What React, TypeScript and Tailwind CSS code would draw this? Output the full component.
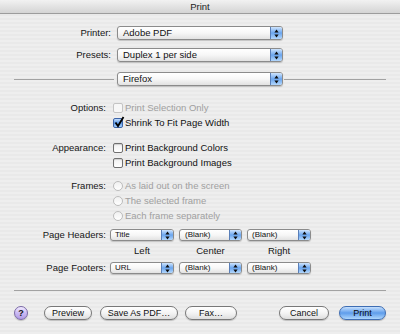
import type { ReactNode } from 'react';

function Arrows() {
  return (
    <svg width="5" height="9" viewBox="0 0 5 9">
      <path d="M2.5 0.6 L4.6 3.4 L0.4 3.4 Z" fill="#0d0d0d" />
      <path d="M0.4 5.6 L4.6 5.6 L2.5 8.4 Z" fill="#0d0d0d" />
    </svg>
  );
}

function Popup({ label, className, textClass }: { label: string; className: string; textClass: string }) {
  return (
    <div
      className={`flex items-stretch overflow-hidden rounded-[3px] border border-[#8b8b8b] bg-gradient-to-b from-white via-[#f7f7f7] to-[#e2e2e2] shadow-[0_1px_1px_rgba(0,0,0,0.18)] ${className}`}
    >
      <span className={`flex flex-1 items-center text-[#111] ${textClass}`}>{label}</span>
      <span className="flex w-[12px] items-center justify-center border-l border-[#5a7fb8] bg-gradient-to-b from-[#cfe4fc] via-[#6aa5ee] to-[#b3d7fc]">
        <Arrows />
      </span>
    </div>
  );
}

function Checkbox({ checked, disabled }: { checked?: boolean; disabled?: boolean }) {
  if (checked) {
    return (
      <span className="relative block h-[10px] w-[10px] rounded-[2px] border border-[#3d64a8] bg-gradient-to-b from-[#c4defc] via-[#5c9ae9] to-[#a9d2fb]">
        <svg className="absolute -top-[3px] left-[0px]" width="11" height="12" viewBox="0 0 11 12">
          <path d="M1.5 6.5 L4 10 L9.5 1" stroke="#000" strokeWidth="1.8" fill="none" />
        </svg>
      </span>
    );
  }
  return (
    <span
      className={
        disabled
          ? 'block h-[10px] w-[10px] rounded-[2px] border border-[#c4c4c4] bg-[#f7f7f7]'
          : 'block h-[10px] w-[10px] rounded-[2px] border border-[#707070] bg-gradient-to-b from-[#f2f2f2] to-white shadow-[inset_0_1px_1px_rgba(0,0,0,0.15)]'
      }
    />
  );
}

function Radio() {
  return <span className="block h-[10px] w-[10px] rounded-full border border-[#bcbcbc] bg-gradient-to-b from-[#f0f0f0] to-white" />;
}

function Row({ label, children }: { label?: string; children: ReactNode }) {
  return (
    <div className="flex h-[15px] items-center">
      <span className="w-[106px] text-right text-[#151515]">{label}</span>
      <div className="ml-[7px] flex items-center gap-[2px]">{children}</div>
    </div>
  );
}

function Button({ label, className }: { label: string; className: string }) {
  return (
    <div
      className={`flex h-[14px] items-center justify-center rounded-full border border-[#787878] bg-gradient-to-b from-white via-[#f4f4f4] to-[#dedede] text-[9px] text-[#111] shadow-[0_1px_1px_rgba(0,0,0,0.2)] ${className}`}
    >
      {label}
    </div>
  );
}

export default function App() {
  return (
    <div className="flex h-[334px] w-[400px] flex-col overflow-hidden bg-[repeating-linear-gradient(0deg,#eeeeee_0px,#eeeeee_2px,#e9e9e9_2px,#e9e9e9_4px)] font-['Liberation_Sans',Arial,sans-serif] text-[9.5px] leading-none">
      {/* Title bar */}
      <div className="flex h-[14px] items-center justify-center border-b border-[#9c9c9c] bg-gradient-to-b from-[#f2f2f2] to-[#d4d4d4] text-[9.5px] text-[#222]">
        Print
      </div>

      {/* Printer / Presets */}
      <div className="mt-[12px] flex h-[14px] items-center">
        <span className="w-[111px] text-right text-[#151515]">Printer:</span>
        <Popup label="Adobe PDF" className="ml-[6px] h-[14px] w-[166px]" textClass="pl-[5px] text-[9.5px]" />
      </div>
      <div className="mt-[8px] flex h-[14px] items-center">
        <span className="w-[111px] text-right text-[#151515]">Presets:</span>
        <Popup label="Duplex 1 per side" className="ml-[6px] h-[14px] w-[166px]" textClass="pl-[5px] text-[9.5px]" />
      </div>

      {/* Panel selector */}
      <div className="mx-[14px] mt-[10px] flex h-[14px] items-center">
        <div className="h-px w-[100px] bg-[#a2a2a2]" />
        <Popup label="Firefox" className="ml-[3px] h-[14px] w-[166px]" textClass="pl-[5px] text-[9.5px]" />
        <div className="ml-[1px] h-px flex-1 bg-[#a2a2a2]" />
      </div>

      {/* Options */}
      <div className="mt-[14px] flex flex-col">
        <Row label="Options:">
          <Checkbox disabled />
          <span className="text-[#a0a0a0]">Print Selection Only</span>
        </Row>
        <Row>
          <Checkbox checked />
          <span className="text-[#111]">Shrink To Fit Page Width</span>
        </Row>
      </div>

      <div className="mt-[10px] flex flex-col">
        <Row label="Appearance:">
          <Checkbox />
          <span className="text-[#111]">Print Background Colors</span>
        </Row>
        <Row>
          <Checkbox />
          <span className="text-[#111]">Print Background Images</span>
        </Row>
      </div>

      <div className="mt-[8px] flex flex-col">
        <Row label="Frames:">
          <Radio />
          <span className="text-[#a0a0a0]">As laid out on the screen</span>
        </Row>
        <Row>
          <Radio />
          <span className="text-[#a0a0a0]">The selected frame</span>
        </Row>
        <Row>
          <Radio />
          <span className="text-[#a0a0a0]">Each frame separately</span>
        </Row>
      </div>

      {/* Headers and footers */}
      <div className="mt-[5px] flex h-[14px] items-center">
        <span className="w-[106px] text-right text-[#151515]">Page Headers:</span>
        <div className="ml-[4px] flex gap-[5px]">
          <Popup label="Title" className="h-[12px] w-[64px]" textClass="pl-[4px] text-[8px]" />
          <Popup label="(Blank)" className="h-[12px] w-[63px]" textClass="pl-[5px] text-[8px]" />
          <Popup label="(Blank)" className="h-[12px] w-[64px]" textClass="pl-[4px] text-[8px]" />
        </div>
      </div>
      <div className="mt-[2px] flex h-[14px] items-center">
        <div className="ml-[110px] flex gap-[5px] text-[#151515]">
          <span className="w-[64px] text-center">Left</span>
          <span className="w-[63px] text-center">Center</span>
          <span className="w-[64px] text-center">Right</span>
        </div>
      </div>
      <div className="mt-[3px] flex h-[14px] items-center">
        <span className="w-[106px] text-right text-[#151515]">Page Footers:</span>
        <div className="ml-[4px] flex gap-[5px]">
          <Popup label="URL" className="h-[12px] w-[64px]" textClass="pl-[4px] text-[8px]" />
          <Popup label="(Blank)" className="h-[12px] w-[63px]" textClass="pl-[5px] text-[8px]" />
          <Popup label="(Blank)" className="h-[12px] w-[64px]" textClass="pl-[4px] text-[8px]" />
        </div>
      </div>

      {/* Bottom separator and buttons */}
      <div className="mx-[14px] mt-[15px] h-px bg-[#a2a2a2]" />
      <div className="mt-[15px] flex items-center justify-between px-[14px]">
        <div className="flex items-center">
          <div className="flex h-[14px] w-[14px] items-center justify-center rounded-full border border-[#7a68a6] bg-gradient-to-b from-[#f3edff] via-[#cbbaf4] to-[#b09de6] text-[9px] font-bold text-[#111] shadow-[0_1px_1px_rgba(0,0,0,0.2)]">
            ?
          </div>
          <Button label="Preview" className="ml-[16px] w-[48px]" />
          <Button label="Save As PDF…" className="ml-[8px] w-[78px]" />
          <Button label="Fax…" className="ml-[7px] w-[52px]" />
        </div>
        <div className="flex items-center">
          <Button label="Cancel" className="w-[50px]" />
          <div className="ml-[10px] flex h-[14px] w-[47px] items-center justify-center rounded-full border border-[#3e6db3] bg-gradient-to-b from-[#c6e0fd] via-[#5f9deb] to-[#aed6fc] text-[9px] text-[#0a0a0a] shadow-[0_1px_1px_rgba(0,0,0,0.25)]">
            Print
          </div>
        </div>
      </div>
    </div>
  );
}
